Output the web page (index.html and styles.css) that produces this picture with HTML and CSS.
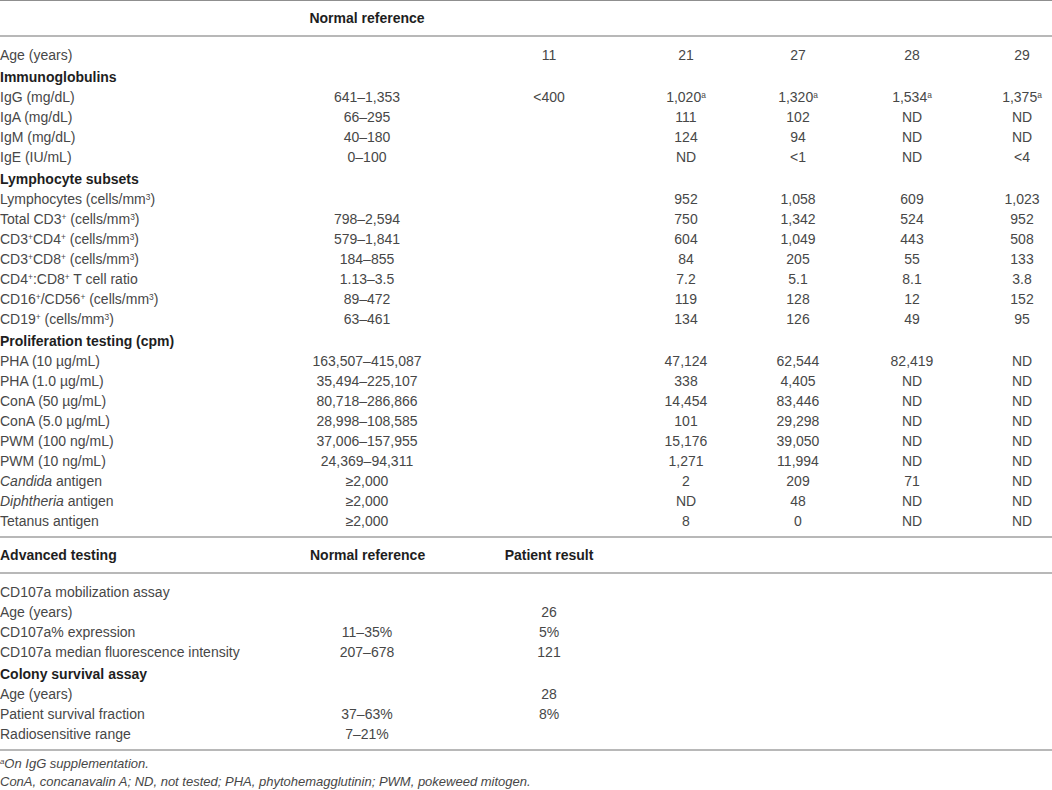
FILE: index.html
```html
<!DOCTYPE html>
<html lang="en">
<head>
<meta charset="utf-8">
<title>Immunological evaluation</title>
<link rel="stylesheet" href="styles.css">
</head>
<body>
<table class="tbl main">
  <colgroup>
    <col class="c1"><col class="c2"><col class="c3"><col class="c4"><col class="c5"><col class="c6"><col class="c7">
  </colgroup>
  <thead>
    <tr><th class="left"></th><th>Normal reference</th><th></th><th></th><th></th><th></th><th></th></tr>
  </thead>
  <tbody>
    <tr class="first"><td class="left">Age (years)</td><td></td><td>11</td><td>21</td><td>27</td><td>28</td><td>29</td></tr>
    <tr class="sect"><td class="left" colspan="7">Immunoglobulins</td></tr>
    <tr><td class="left">IgG (mg/dL)</td><td>641–1,353</td><td>&lt;400</td><td>1,020<sup>a</sup></td><td>1,320<sup>a</sup></td><td>1,534<sup>a</sup></td><td>1,375<sup>a</sup></td></tr>
    <tr><td class="left">IgA (mg/dL)</td><td>66–295</td><td></td><td>111</td><td>102</td><td>ND</td><td>ND</td></tr>
    <tr><td class="left">IgM (mg/dL)</td><td>40–180</td><td></td><td>124</td><td>94</td><td>ND</td><td>ND</td></tr>
    <tr><td class="left">IgE (IU/mL)</td><td>0–100</td><td></td><td>ND</td><td>&lt;1</td><td>ND</td><td>&lt;4</td></tr>
    <tr class="sect"><td class="left" colspan="7">Lymphocyte subsets</td></tr>
    <tr><td class="left">Lymphocytes (cells/mm<sup>3</sup>)</td><td></td><td></td><td>952</td><td>1,058</td><td>609</td><td>1,023</td></tr>
    <tr><td class="left">Total CD3<sup>+</sup> (cells/mm<sup>3</sup>)</td><td>798–2,594</td><td></td><td>750</td><td>1,342</td><td>524</td><td>952</td></tr>
    <tr><td class="left">CD3<sup>+</sup>CD4<sup>+</sup> (cells/mm<sup>3</sup>)</td><td>579–1,841</td><td></td><td>604</td><td>1,049</td><td>443</td><td>508</td></tr>
    <tr><td class="left">CD3<sup>+</sup>CD8<sup>+</sup> (cells/mm<sup>3</sup>)</td><td>184–855</td><td></td><td>84</td><td>205</td><td>55</td><td>133</td></tr>
    <tr><td class="left">CD4<sup>+</sup>:CD8<sup>+</sup> T cell ratio</td><td>1.13–3.5</td><td></td><td>7.2</td><td>5.1</td><td>8.1</td><td>3.8</td></tr>
    <tr><td class="left">CD16<sup>+</sup>/CD56<sup>+</sup> (cells/mm<sup>3</sup>)</td><td>89–472</td><td></td><td>119</td><td>128</td><td>12</td><td>152</td></tr>
    <tr><td class="left">CD19<sup>+</sup> (cells/mm<sup>3</sup>)</td><td>63–461</td><td></td><td>134</td><td>126</td><td>49</td><td>95</td></tr>
    <tr class="sect"><td class="left" colspan="7">Proliferation testing (cpm)</td></tr>
    <tr><td class="left">PHA (10 µg/mL)</td><td>163,507–415,087</td><td></td><td>47,124</td><td>62,544</td><td>82,419</td><td>ND</td></tr>
    <tr><td class="left">PHA (1.0 µg/mL)</td><td>35,494–225,107</td><td></td><td>338</td><td>4,405</td><td>ND</td><td>ND</td></tr>
    <tr><td class="left">ConA (50 µg/mL)</td><td>80,718–286,866</td><td></td><td>14,454</td><td>83,446</td><td>ND</td><td>ND</td></tr>
    <tr><td class="left">ConA (5.0 µg/mL)</td><td>28,998–108,585</td><td></td><td>101</td><td>29,298</td><td>ND</td><td>ND</td></tr>
    <tr><td class="left">PWM (100 ng/mL)</td><td>37,006–157,955</td><td></td><td>15,176</td><td>39,050</td><td>ND</td><td>ND</td></tr>
    <tr><td class="left">PWM (10 ng/mL)</td><td>24,369–94,311</td><td></td><td>1,271</td><td>11,994</td><td>ND</td><td>ND</td></tr>
    <tr><td class="left"><i>Candida</i> antigen</td><td>≥2,000</td><td></td><td>2</td><td>209</td><td>71</td><td>ND</td></tr>
    <tr><td class="left"><i>Diphtheria</i> antigen</td><td>≥2,000</td><td></td><td>ND</td><td>48</td><td>ND</td><td>ND</td></tr>
    <tr class="last"><td class="left">Tetanus antigen</td><td>≥2,000</td><td></td><td>8</td><td>0</td><td>ND</td><td>ND</td></tr>
  </tbody>
</table>

<table class="tbl adv">
  <colgroup>
    <col class="a1"><col class="a2"><col class="a3"><col class="a4">
  </colgroup>
  <thead>
    <tr><th class="left">Advanced testing</th><th>Normal reference</th><th>Patient result</th><th></th></tr>
  </thead>
  <tbody>
    <tr class="first"><td class="left">CD107a mobilization assay</td><td></td><td></td><td></td></tr>
    <tr><td class="left">Age (years)</td><td></td><td>26</td><td></td></tr>
    <tr><td class="left">CD107a% expression</td><td>11–35%</td><td>5%</td><td></td></tr>
    <tr><td class="left">CD107a median fluorescence intensity</td><td>207–678</td><td>121</td><td></td></tr>
    <tr class="sect"><td class="left" colspan="4">Colony survival assay</td></tr>
    <tr><td class="left">Age (years)</td><td></td><td>28</td><td></td></tr>
    <tr><td class="left">Patient survival fraction</td><td>37–63%</td><td>8%</td><td></td></tr>
    <tr class="last"><td class="left">Radiosensitive range</td><td>7–21%</td><td></td><td></td></tr>
  </tbody>
</table>

<div class="notes">
  <p><sup>a</sup>On IgG supplementation.</p>
  <p>ConA, concanavalin A; ND, not tested; PHA, phytohemagglutinin; PWM, pokeweed mitogen.</p>
</div>
</body>
</html>
```

FILE: styles.css
```css
html, body {
  margin: 0;
  padding: 0;
  background: #ffffff;
}

body {
  width: 1052px;
  font-family: "Liberation Sans", Arial, sans-serif;
  font-size: 14px;
  color: #474747;
}

.tbl {
  width: 1052px;
  border-collapse: collapse;
  table-layout: fixed;
}

.tbl th,
.tbl td {
  padding: 0;
  text-align: center;
  white-space: nowrap;
  line-height: 20px;
  height: 20px;
}

.tbl .left {
  text-align: left;
}

.tbl th {
  font-weight: bold;
  color: #1e1e1e;
  height: 34px;
}

.main thead tr {
  border-top: 1px solid #8f8f8f;
  border-bottom: 2px solid #b8b8b8;
}

.adv thead tr {
  border-top: 2px solid #b8b8b8;
  border-bottom: 2px solid #b8b8b8;
}

.tbl tr.first td {
  padding-top: 8px;
}

.tbl tr.last td {
  padding-bottom: 5px;
}

.tbl tr.sect td {
  font-weight: bold;
  color: #1e1e1e;
  height: 20px;
  padding-top: 2px;
  line-height: 20px;
}

.adv tr.last {
  border-bottom: 2px solid #b8b8b8;
}

.main .c1 { width: 244px; }
.main .c2 { width: 246px; }
.main .c3 { width: 118px; }
.main .c4 { width: 156px; }
.main .c5 { width: 68px; }
.main .c6 { width: 160px; }
.main .c7 { width: 60px; }

.adv .a1 { width: 310px; }
.adv .a2 { width: 114px; }
.adv .a3 { width: 250px; }
.adv .a4 { width: 378px; }

sup {
  font-size: 0.6em;
  line-height: 0;
  vertical-align: 0.5em;
}

.notes {
  padding-top: 4px;
  font-size: 13px;
  font-style: italic;
  color: #474747;
}

.notes p {
  margin: 0;
  line-height: 18px;
}
```
